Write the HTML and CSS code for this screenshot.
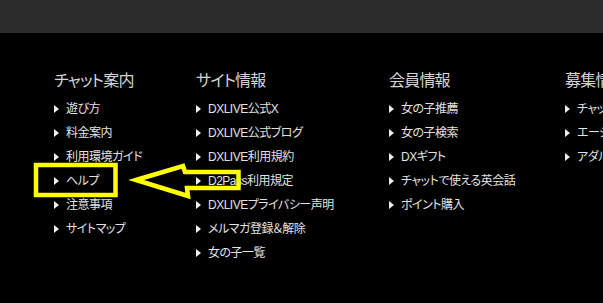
FILE: index.html
```html
<!DOCTYPE html>
<html lang="ja">
<head>
<meta charset="utf-8">
<title>Footer</title>
<link rel="stylesheet" href="styles.css">
</head>
<body>
<div class="topbar"></div>
<footer class="footer">
  <div class="col col-1">
    <h3 class="col-title">チャット案内</h3>
    <ul class="links">
      <li>遊び方</li>
      <li>料金案内</li>
      <li>利用環境ガイド</li>
      <li>ヘルプ</li>
      <li>注意事項</li>
      <li>サイトマップ</li>
    </ul>
  </div>
  <div class="col col-2">
    <h3 class="col-title">サイト情報</h3>
    <ul class="links">
      <li>DXLIVE公式X</li>
      <li>DXLIVE公式ブログ</li>
      <li>DXLIVE利用規約</li>
      <li>D2Pass利用規定</li>
      <li>DXLIVEプライバシー声明</li>
      <li>メルマガ登録＆解除</li>
      <li>女の子一覧</li>
    </ul>
  </div>
  <div class="col col-3">
    <h3 class="col-title">会員情報</h3>
    <ul class="links">
      <li>女の子推薦</li>
      <li>女の子検索</li>
      <li>DXギフト</li>
      <li>チャットで使える英会話</li>
      <li>ポイント購入</li>
    </ul>
  </div>
  <div class="col col-4">
    <h3 class="col-title">募集情報</h3>
    <ul class="links">
      <li>チャットレディ募集</li>
      <li>エージェント募集</li>
      <li>アダルトアフィリエイト</li>
    </ul>
  </div>
</footer>
<svg class="annotation" width="603" height="303" viewBox="0 0 603 303" xmlns="http://www.w3.org/2000/svg">
  <rect x="36" y="165" width="79.5" height="30" fill="none" stroke="#ffff00" stroke-width="4.5"/>
  <polygon points="136,180 183,166 185,172 238.5,172 238.5,188 187,188 188,196" fill="none" stroke="#ffff00" stroke-width="4.5" stroke-linejoin="miter"/>
</svg>
</body>
</html>
```
FILE: styles.css
```css
html, body {
  margin: 0;
  padding: 0;
  background: #000;
  width: 603px;
  height: 303px;
  overflow: hidden;
  position: relative;
}
body {
  font-family: "Liberation Sans", "Noto Sans CJK JP", sans-serif;
  font-feature-settings: "palt";
  color: #e0e0e0;
}
.topbar {
  height: 33px;
  background: #2c2c2c;
}
.footer {
  display: flex;
  padding: 36px 0 0 54px;
  white-space: nowrap;
}
.col { flex: none; overflow: hidden; }
.col-1 { width: 142px; }
.col-2 { width: 193px; }
.col-3 { width: 176px; }
.col-4 { flex: 1; }
.col-title {
  margin: 0 0 4px;
  font-size: 16px;
  line-height: 24px;
  font-weight: normal;
  letter-spacing: -0.8px;
  color: #d4d4d4;
}
.links {
  list-style: none;
  margin: 0;
  padding: 0;
}
.links li {
  display: flex;
  align-items: center;
  height: 24px;
  font-size: 12px;
  line-height: 24px;
  letter-spacing: -0.5px;
  color: #e2e2e2;
}
.links li::before {
  content: "";
  flex: none;
  width: 0;
  height: 0;
  border-left: 5px solid #f0f0f0;
  border-top: 4px solid transparent;
  border-bottom: 4px solid transparent;
  margin-right: 7px;
}
.annotation {
  position: absolute;
  left: 0;
  top: 0;
  pointer-events: none;
}
```
